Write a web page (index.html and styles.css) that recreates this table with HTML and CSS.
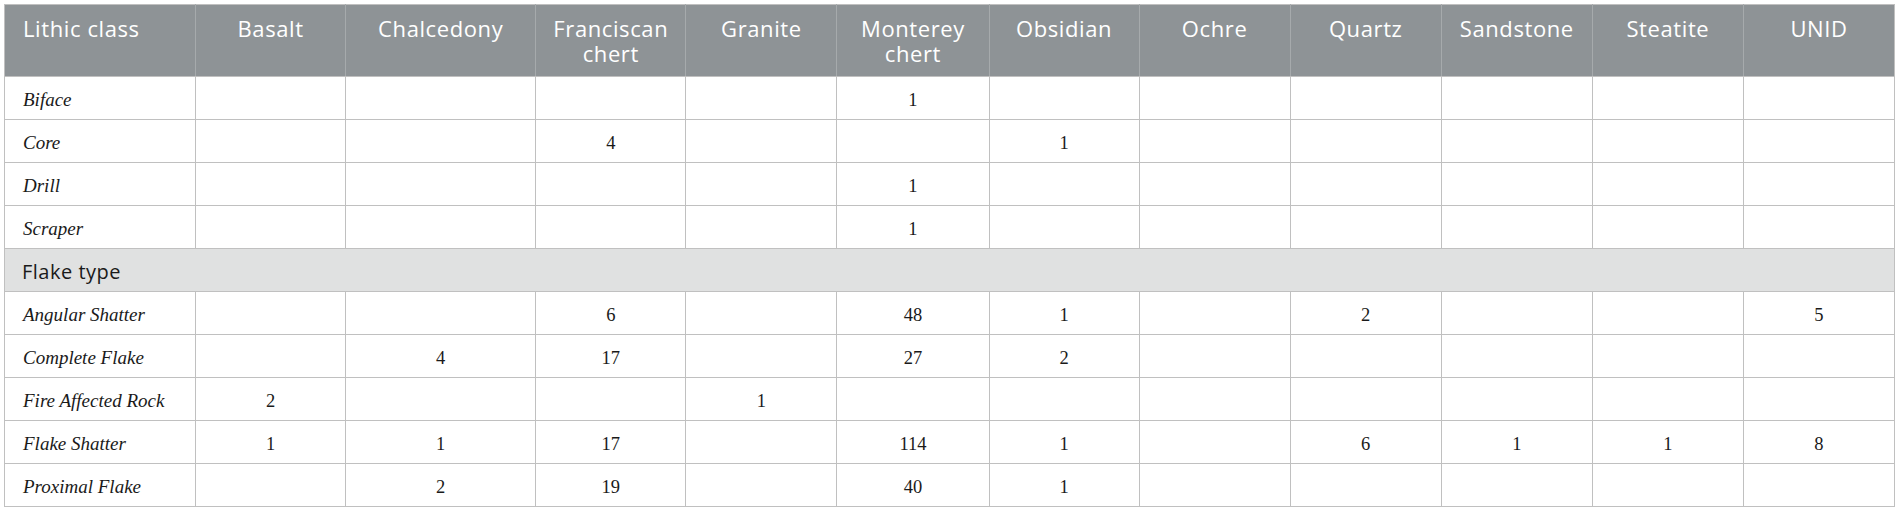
FILE: index.html
```html
<!DOCTYPE html>
<html>
<head>
<meta charset="utf-8">
<link rel="stylesheet" href="styles.css">
</head>
<body>
<table class="lithic">
  <colgroup>
    <col class="c-label"><col class="c-150"><col class="c-190"><col class="c-150"><col class="c-151"><col class="c-152"><col class="c-150"><col class="c-151"><col class="c-151"><col class="c-151"><col class="c-151"><col class="c-151">
  </colgroup>
  <thead>
    <tr>
      <th class="first">Lithic class</th>
      <th>Basalt</th>
      <th>Chalcedony</th>
      <th>Franciscan chert</th>
      <th>Granite</th>
      <th>Monterey chert</th>
      <th>Obsidian</th>
      <th>Ochre</th>
      <th>Quartz</th>
      <th>Sandstone</th>
      <th>Steatite</th>
      <th>UNID</th>
    </tr>
  </thead>
  <tbody>
    <tr><td class="label">Biface</td><td></td><td></td><td></td><td></td><td>1</td><td></td><td></td><td></td><td></td><td></td><td></td></tr>
    <tr><td class="label">Core</td><td></td><td></td><td>4</td><td></td><td></td><td>1</td><td></td><td></td><td></td><td></td><td></td></tr>
    <tr><td class="label">Drill</td><td></td><td></td><td></td><td></td><td>1</td><td></td><td></td><td></td><td></td><td></td><td></td></tr>
    <tr><td class="label">Scraper</td><td></td><td></td><td></td><td></td><td>1</td><td></td><td></td><td></td><td></td><td></td><td></td></tr>
    <tr class="section"><td colspan="12">Flake type</td></tr>
    <tr><td class="label">Angular Shatter</td><td></td><td></td><td>6</td><td></td><td>48</td><td>1</td><td></td><td>2</td><td></td><td></td><td>5</td></tr>
    <tr><td class="label">Complete Flake</td><td></td><td>4</td><td>17</td><td></td><td>27</td><td>2</td><td></td><td></td><td></td><td></td><td></td></tr>
    <tr><td class="label">Fire Affected Rock</td><td>2</td><td></td><td></td><td>1</td><td></td><td></td><td></td><td></td><td></td><td></td><td></td></tr>
    <tr><td class="label">Flake Shatter</td><td>1</td><td>1</td><td>17</td><td></td><td>114</td><td>1</td><td></td><td>6</td><td>1</td><td>1</td><td>8</td></tr>
    <tr><td class="label">Proximal Flake</td><td></td><td>2</td><td>19</td><td></td><td>40</td><td>1</td><td></td><td></td><td></td><td></td><td></td></tr>
  </tbody>
</table>
</body>
</html>
```
FILE: styles.css
```css
html, body {
  margin: 0;
  padding: 0;
  background: #ffffff;
}
body {
  padding: 4px 0 0 4px;
}
.lithic {
  border-collapse: collapse;
  table-layout: fixed;
  width: 1891px;
  border: 1px solid #c0c0c0;
}
.c-label { width: 191px; }
.c-150 { width: 150px; }
.c-151 { width: 151px; }
.c-152 { width: 152px; }
.c-190 { width: 190px; }

.lithic th {
  background: #8e9396;
  color: #ffffff;
  font-family: "Open Sans", "Noto Sans", sans-serif;
  font-weight: 400;
  font-size: 22px;
  letter-spacing: 0.6px;
  line-height: 25px;
  text-align: center;
  vertical-align: top;
  padding: 11px 8px 0 8px;
  height: 60px;
  border-left: 1px solid #a6aaac;
  border-bottom: 1px solid #c0c0c0;
}
.lithic th.first {
  text-align: left;
  padding-left: 18px;
  border-left: 1px solid #c0c0c0;
}
.lithic td {
  border: 1px solid #c0c0c0;
  height: 38px;
  padding: 4px 8px 0 8px;
  font-family: "Liberation Serif", "Times New Roman", serif;
  font-size: 18.5px;
  color: #1a1a1a;
  text-align: center;
  vertical-align: middle;
}
.lithic td.label {
  text-align: left;
  font-style: italic;
  font-size: 19px;
  padding-left: 18px;
}
.lithic tr.section td {
  background: #e0e1e1;
  text-align: left;
  height: 40px;
  padding: 2px 8px 0 17px;
  font-family: "Open Sans", "Noto Sans", sans-serif;
  font-size: 20px;
  letter-spacing: 0.5px;
  color: #1a1a1a;
}
```
